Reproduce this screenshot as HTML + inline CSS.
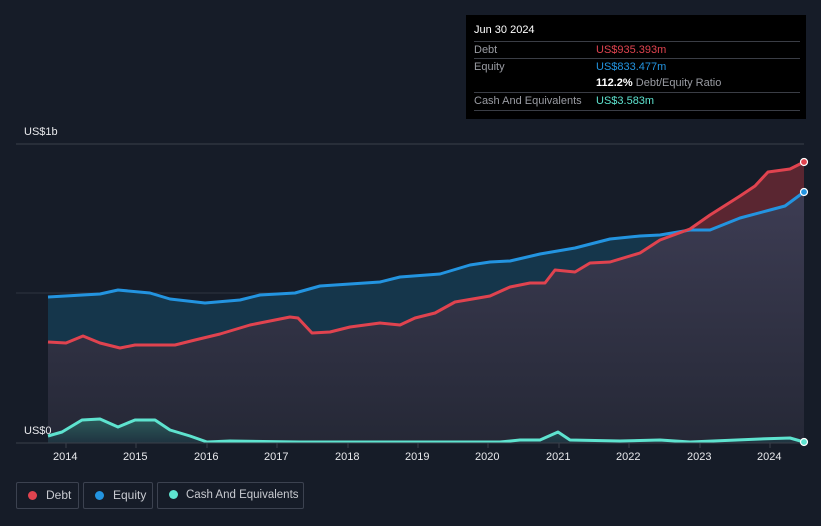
<!DOCTYPE html>
<html><head><meta charset="utf-8"><style>
html,body{margin:0;width:821px;height:526px;overflow:hidden}
body{background:#161c28;font-family:"Liberation Sans",sans-serif;position:relative}
.tip{position:absolute;left:466px;top:15px;width:340px;height:104px;background:#000;color:#fff;font-size:11px}
.row{position:absolute;left:8px;width:326px;border-top:1px solid #3a3d45;height:17px;line-height:17px}
.row span{position:absolute;left:122px}
.lab{color:#9a9ca3}
.lg{position:absolute;top:482px;height:27px;border:1px solid #3c4250;border-radius:2px;color:#c8cad0;font-size:12px;line-height:25px;box-sizing:border-box;white-space:nowrap}
.lg i{display:inline-block;width:9px;height:9px;border-radius:50%;margin:0 9px 0 11px;vertical-align:-1px}
.ax{position:absolute;color:#e8e9ec;font-size:11px}
</style></head><body>
<svg width="821" height="526" style="position:absolute;left:0;top:0">
<defs>
<linearGradient id="g" x1="0" y1="0" x2="0" y2="1"><stop offset="0" stop-color="#403f57"/><stop offset="1" stop-color="#252836"/></linearGradient>
<linearGradient id="c" x1="0" y1="0" x2="0" y2="1"><stop offset="0" stop-color="#2c5a5a"/><stop offset="1" stop-color="#1f3340"/></linearGradient>
<clipPath id="eq"><path d="M48,297 L100,294 118,290 150,293 170,299 205,303 240,300 260,295 295,293 320,286 350,284 380,282 400,277 440,274 470,265 490,262 510,261 540,254 575,248 610,239 640,236 660,235 690,230 710,230 740,218 770,210 785,206 804,192 L804,443 48,443Z"/></clipPath>
</defs>
<line x1="16" y1="144" x2="804" y2="144" stroke="#3a3f4a"/>
<line x1="16" y1="293" x2="804" y2="293" stroke="#2f3440"/>
<path d="M48,342 L66,343 83,336 100,343 120,348 135,345 175,345 195,340 220,334 250,325 290,317 298,318 312,333 330,332 350,327 380,323 400,325 415,318 435,313 455,302 490,296 510,287 530,283 545,283 555,270 575,272 590,263 610,262 640,253 660,240 690,229 710,215 740,196 755,186 768,172 790,169 804,162 L804,443 48,443Z" fill="#5a2631"/>
<path d="M48,297 L100,294 118,290 150,293 170,299 205,303 240,300 260,295 295,293 320,286 350,284 380,282 400,277 440,274 470,265 490,262 510,261 540,254 575,248 610,239 640,236 660,235 690,230 710,230 740,218 770,210 785,206 804,192 L804,443 48,443Z" fill="#15364b"/>
<path clip-path="url(#eq)" d="M48,342 L66,343 83,336 100,343 120,348 135,345 175,345 195,340 220,334 250,325 290,317 298,318 312,333 330,332 350,327 380,323 400,325 415,318 435,313 455,302 490,296 510,287 530,283 545,283 555,270 575,272 590,263 610,262 640,253 660,240 690,229 710,215 740,196 755,186 768,172 790,169 804,162 L804,443 48,443Z" fill="url(#g)"/>
<path d="M48,436 62,432 82,420 100,419 118,427 135,420 155,420 170,430 190,436 207,442 230,441 300,442 500,442 520,440 540,440 558,432 570,440 620,441 660,440 690,442 760,439 790,438 804,442 L804,443 48,443Z" fill="url(#c)"/>
<path d="M48,297 L100,294 118,290 150,293 170,299 205,303 240,300 260,295 295,293 320,286 350,284 380,282 400,277 440,274 470,265 490,262 510,261 540,254 575,248 610,239 640,236 660,235 690,230 710,230 740,218 770,210 785,206 804,192" fill="none" stroke="#2394e0" stroke-width="3" stroke-linejoin="round"/>
<path d="M48,342 L66,343 83,336 100,343 120,348 135,345 175,345 195,340 220,334 250,325 290,317 298,318 312,333 330,332 350,327 380,323 400,325 415,318 435,313 455,302 490,296 510,287 530,283 545,283 555,270 575,272 590,263 610,262 640,253 660,240 690,229 710,215 740,196 755,186 768,172 790,169 804,162" fill="none" stroke="#e0434f" stroke-width="3" stroke-linejoin="round"/>
<path d="M48,436 62,432 82,420 100,419 118,427 135,420 155,420 170,430 190,436 207,442 230,441 300,442 500,442 520,440 540,440 558,432 570,440 620,441 660,440 690,442 760,439 790,438 804,442" fill="none" stroke="#5ee3cf" stroke-width="3" stroke-linejoin="round"/>
<line x1="16" y1="443" x2="804" y2="443" stroke="#3a3f4a"/>
<g stroke="#3a3f4a"><line x1="66" y1="443" x2="66" y2="448"/><line x1="136" y1="443" x2="136" y2="448"/><line x1="207" y1="443" x2="207" y2="448"/><line x1="277" y1="443" x2="277" y2="448"/><line x1="348" y1="443" x2="348" y2="448"/><line x1="418" y1="443" x2="418" y2="448"/><line x1="488" y1="443" x2="488" y2="448"/><line x1="559" y1="443" x2="559" y2="448"/><line x1="629" y1="443" x2="629" y2="448"/><line x1="700" y1="443" x2="700" y2="448"/><line x1="770" y1="443" x2="770" y2="448"/></g>
<circle cx="804" cy="162" r="3.5" fill="#e0434f" stroke="#fff" stroke-width="1.2"/>
<circle cx="804" cy="192" r="3.5" fill="#2394e0" stroke="#fff" stroke-width="1.2"/>
<circle cx="804" cy="442" r="3.5" fill="#5ee3cf" stroke="#fff" stroke-width="1.2"/>
</svg>
<div class="ax" style="left:24px;top:126px">US$1b</div>
<div class="ax" style="left:24px;top:425px">US$0</div>
<div class="ax" style="left:53px;top:451px">2014</div><div class="ax" style="left:123px;top:451px">2015</div><div class="ax" style="left:194px;top:451px">2016</div><div class="ax" style="left:264px;top:451px">2017</div><div class="ax" style="left:335px;top:451px">2018</div><div class="ax" style="left:405px;top:451px">2019</div><div class="ax" style="left:475px;top:451px">2020</div><div class="ax" style="left:546px;top:451px">2021</div><div class="ax" style="left:616px;top:451px">2022</div><div class="ax" style="left:687px;top:451px">2023</div><div class="ax" style="left:757px;top:451px">2024</div>
<div class="tip">
<div style="position:absolute;left:8px;top:9px">Jun 30 2024</div>
<div class="row" style="top:26px"><span style="color:#e0434f;left:122px">US$935.393m</span><b class="lab" style="font-weight:normal">Debt</b></div>
<div class="row" style="top:43px"><span style="color:#2394e0">US$833.477m</span><b class="lab" style="font-weight:normal">Equity</b></div>
<div class="row" style="top:60px;border:none"><span><b>112.2%</b> <i class="lab" style="font-style:normal">Debt/Equity Ratio</i></span></div>
<div class="row" style="top:77px"><span style="color:#5ee3cf">US$3.583m</span><b class="lab" style="font-weight:normal">Cash And Equivalents</b></div>
<div class="row" style="top:95px;height:0"></div>
</div>
<div class="lg" style="left:16px;width:63px"><i style="background:#e0434f"></i>Debt</div>
<div class="lg" style="left:83px;width:70px"><i style="background:#2394e0"></i>Equity</div>
<div class="lg" style="left:157px;width:147px;font-size:11.5px"><i style="background:#5ee3cf;margin-right:8px"></i>Cash And Equivalents</div>
</body></html>
